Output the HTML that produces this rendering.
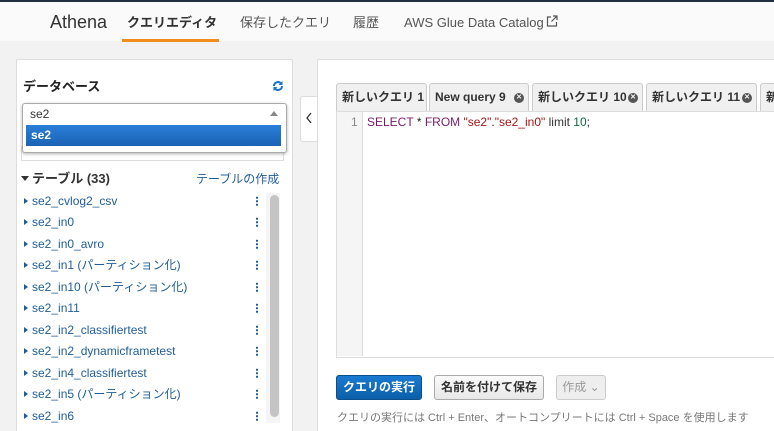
<!DOCTYPE html>
<html><head><meta charset="utf-8"><style>
html,body{margin:0;width:774px;height:431px;overflow:hidden}
body{background:#f2f2f2;font-family:"Liberation Sans","Noto Sans CJK JP",sans-serif;position:relative}
.a{position:absolute;line-height:15px}
.nav{left:0;top:0;width:774px;height:41px;background:#fafafa;border-top:2px solid #232f3e;box-sizing:border-box}
.nav span{position:absolute;top:13px;font-size:13px;color:#555;line-height:15px}
.item{position:absolute;left:24px;font-size:12px;color:#1f5d98;line-height:14px;white-space:nowrap}
.item:before{content:"";display:inline-block;border-left:4px solid #1f5d98;border-top:3.5px solid transparent;border-bottom:3.5px solid transparent;margin-right:4px;vertical-align:1px}
.dots{position:absolute;left:256px;width:2px;height:10px;background:radial-gradient(circle,#1f5d98 1px,transparent 1.2px) 0 0/2px 3.5px}
.tab{position:absolute;top:83px;height:28px;background:#f0f0f0;border:1px solid #ccc;border-bottom:none;border-radius:3px 3px 0 0;box-sizing:border-box;font-size:12px;font-weight:bold;color:#333;padding:6px 0 0 5px;white-space:nowrap;overflow:hidden;line-height:15px}
.x{position:absolute;top:9px;width:10px;height:10px;border-radius:50%;background:#555;color:#fff;font-size:7px;line-height:10px;text-align:center}
</style></head><body>
<div class="a nav">
<span style="left:50px;top:10px;font-size:18px;line-height:20px;color:#333">Athena</span>
<span style="left:127px;font-weight:bold;color:#333">クエリエディタ</span>
<div class="a" style="left:122px;top:37px;width:97px;height:3px;background:#f08c1e"></div>
<span style="left:240px">保存したクエリ</span>
<span style="left:353px">履歴</span>
<span style="left:404px">AWS Glue Data Catalog<svg width="12" height="12" viewBox="0 0 12 12" style="margin-left:2px"><path d="M5 2H1.5v9h9V7M7 1h4v4M11 1L5.5 6.5" fill="none" stroke="#555" stroke-width="1.2"/></svg></span>
</div>
<div class="a" style="left:16px;top:59px;width:275px;height:380px;background:#fff;border:1px solid #ddd;border-radius:2px"></div>
<div class="a" style="left:23px;top:79px;font-size:13px;font-weight:bold;color:#222">データベース</div>
<svg class="a" style="left:272px;top:80px" width="12" height="12" viewBox="0 0 12 12"><path d="M2 6a4 4 0 0 1 7-2.6M10 6a4 4 0 0 1-7 2.6" fill="none" stroke="#1a73c7" stroke-width="2"/><path d="M10.5 1v4h-4zM1.5 11V7h4z" fill="#1a73c7"/></svg>
<div class="a" style="left:21px;top:146px;width:261px;height:13px;border:1px solid #ddd"></div>
<div class="a" style="left:22px;top:103px;width:263px;height:48px;background:#fff;border:1px solid #aaa;border-radius:3px;box-shadow:0 1px 3px rgba(0,0,0,.3)"></div>
<div class="a" style="left:30px;top:107px;font-size:12px;color:#333">se2</div>
<div class="a" style="left:270px;top:111px;border-bottom:5px solid #888;border-left:4px solid transparent;border-right:4px solid transparent"></div>
<div class="a" style="left:26px;top:125px;width:255px;height:21px;background:linear-gradient(#2a7fd8,#1a62b4)"></div>
<div class="a" style="left:31px;top:128px;font-size:12px;color:#fff;font-weight:bold">se2</div>
<div class="a" style="left:21px;top:171px;font-size:13px;font-weight:bold;color:#333"><span style="display:inline-block;border-top:5px solid #333;border-left:4px solid transparent;border-right:4px solid transparent;vertical-align:2px;margin-right:3px"></span>テーブル (33)</div>
<div class="a" style="left:196px;top:172px;font-size:12px;color:#1f5d98">テーブルの作成</div>
<div class="a" style="left:266px;top:193px;width:14px;height:230px;background:#f5f5f5"></div>
<div class="a" style="left:270px;top:195px;width:9px;height:222px;background:#c4c4c4;border-radius:5px"></div>
<div class="item" style="top:194px">se2_cvlog2_csv</div><div class="dots" style="top:196px"></div>
<div class="item" style="top:215px">se2_in0</div><div class="dots" style="top:217px"></div>
<div class="item" style="top:237px">se2_in0_avro</div><div class="dots" style="top:239px"></div>
<div class="item" style="top:258px">se2_in1 (パーティション化)</div><div class="dots" style="top:260px"></div>
<div class="item" style="top:280px">se2_in10 (パーティション化)</div><div class="dots" style="top:282px"></div>
<div class="item" style="top:301px">se2_in11</div><div class="dots" style="top:303px"></div>
<div class="item" style="top:323px">se2_in2_classifiertest</div><div class="dots" style="top:325px"></div>
<div class="item" style="top:344px">se2_in2_dynamicframetest</div><div class="dots" style="top:346px"></div>
<div class="item" style="top:366px">se2_in4_classifiertest</div><div class="dots" style="top:368px"></div>
<div class="item" style="top:387px">se2_in5 (パーティション化)</div><div class="dots" style="top:389px"></div>
<div class="item" style="top:409px">se2_in6</div><div class="dots" style="top:411px"></div>
<div class="a" style="left:300px;top:96px;width:18px;height:44px;background:#fff;border:1px solid #ddd;border-right:none;border-radius:3px 0 0 3px"></div>
<svg class="a" style="left:305px;top:112px" width="8" height="12" viewBox="0 0 8 12"><path d="M6 1L2 6l4 5" fill="none" stroke="#333" stroke-width="1.3"/></svg>
<div class="a" style="left:317px;top:59px;width:470px;height:380px;background:#fff;border:1px solid #ddd;border-radius:2px"></div>
<div class="a" style="left:336px;top:111px;width:450px;height:245px;background:#fff;border:1px solid #ddd"></div>
<div class="a" style="left:337px;top:112px;width:25px;height:244px;background:#f5f5f5;border-right:1px solid #ddd"></div>
<div class="tab" style="left:336px;width:91px">新しいクエリ 1</div>
<div class="tab" style="left:429px;width:100px">New query 9 <span class="x" style="left:84px">✕</span></div>
<div class="tab" style="left:532px;width:111px">新しいクエリ 10 <span class="x" style="left:95px">✕</span></div>
<div class="tab" style="left:646px;width:111px">新しいクエリ 11 <span class="x" style="left:95px">✕</span></div>
<div class="tab" style="left:760px;width:30px">新</div>
<div class="a" style="left:351px;top:115px;font-size:12px;color:#888">1</div>
<div class="a" style="left:367px;top:115px;font-size:12px;color:#7a1a6a">SELECT <span style="color:#222">*</span> FROM <span style="color:#a31515">"se2"</span><span style="color:#222">.</span><span style="color:#a31515">"se2_in0"</span> <span style="color:#333">limit</span> <span style="color:#116644">10</span><span style="color:#222">;</span></div>
<div class="a" style="left:336px;top:375px;width:86px;height:25px;background:linear-gradient(#1a7ad0,#0b5fa8);border:1px solid #0a4f8c;border-radius:3px;box-sizing:border-box;color:#fff;font-size:12px;font-weight:bold;text-align:center;line-height:23px">クエリの実行</div>
<div class="a" style="left:434px;top:375px;width:110px;height:25px;background:linear-gradient(#fafafa,#e8e8e8);border:1px solid #aaa;border-radius:3px;box-sizing:border-box;color:#333;font-size:12px;font-weight:bold;text-align:center;line-height:23px">名前を付けて保存</div>
<div class="a" style="left:556px;top:375px;width:50px;height:25px;background:#eee;border:1px solid #ccc;border-radius:3px;box-sizing:border-box;color:#999;font-size:12px;text-align:center;line-height:23px">作成 ⌄</div>
<div class="a" style="left:337px;top:411px;font-size:11px;color:#777;white-space:nowrap">クエリの実行には Ctrl + Enter、オートコンプリートには Ctrl + Space を使用します</div>
</body></html>
